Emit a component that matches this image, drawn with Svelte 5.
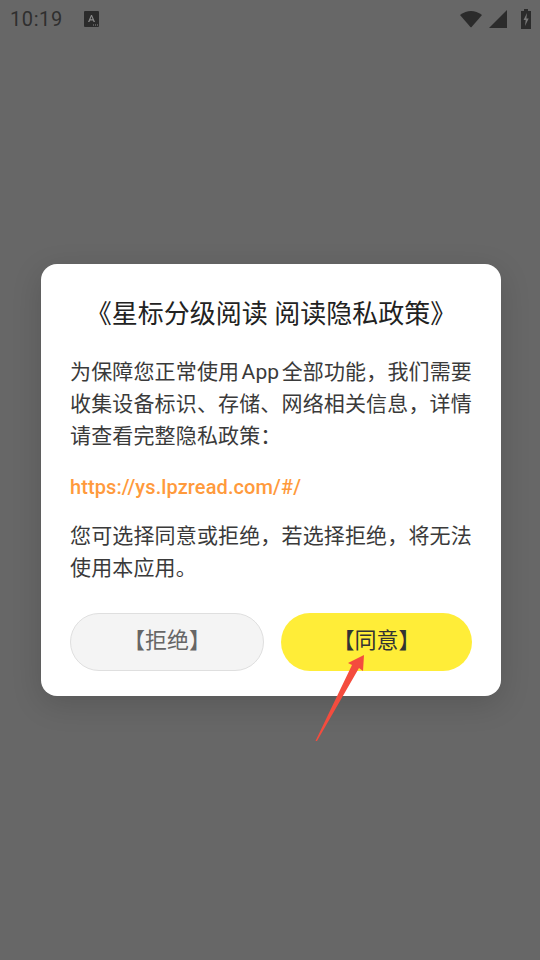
<script>
  const lines1 = ['为保障您正常使用 App 全部功能，我们需要', '收集设备标识、存储、网络相关信息，详情', '请查看完整隐私政策：'];
  const lines2 = ['您可选择同意或拒绝，若选择拒绝，将无法', '使用本应用。'];
</script>

<div class="screen">
  <header class="status">
    <div class="left">
      <span class="time">10:19</span>
      <svg class="a-icon" width="16" height="16" viewBox="0 0 16 16">
        <rect width="15" height="16" rx="1" fill="#2b2b2b" />
        <path d="M4 11 L7 4 H8 L11 11 H9.6 L9 9.4 H6 L5.4 11 Z M6.5 8.2 H8.5 L7.5 5.6 Z" fill="#8a8a8a" fill-rule="evenodd" />
        <path d="M9 14h1M11 14h1M13 14h1" stroke="#8a8a8a" stroke-width="1" />
      </svg>
    </div>
    <div class="right">
      <svg width="24" height="18" viewBox="0 0 24 18"><path d="M0 5 Q11 -3 22 5 L11.600 17 Q11 17.500 10.400 17 Z" fill="#2b2b2b" /></svg>
      <svg width="18" height="18" viewBox="0 0 18 18"><path d="M0 18 L18 0 V18 Z" fill="#2b2b2b" /></svg>
      <svg class="battery" width="10" height="20" viewBox="0 0 10 20">
        <path d="M3 0 H7 V2 H10 V20 H0 V2 H3 Z" fill="#2b2b2b" />
        <path d="M6 4 L2.500 11 H4.700 L4 17 L7.700 9.500 H5.400 Z" fill="#777" />
      </svg>
    </div>
  </header>

  <main class="center">
    <section class="dialog">
      <h1>《星标分级阅读 阅读隐私政策》</h1>
      <div class="para first">
        {#each lines1 as l}<p>{l}</p>{/each}
      </div>
      <a class="link" href="#top">https://ys.lpzread.com/#/</a>
      <div class="para second">
        {#each lines2 as l}<p>{l}</p>{/each}
      </div>
      <div class="actions">
        <button class="reject"><span>【拒绝】</span></button>
        <button class="agree"><span>【同意】</span></button>
      </div>
      <svg class="arrow" width="60" height="94" viewBox="0 0 60 94">
        <path d="M4.500 91 L41 15 L37 13 L53 5 L52 21 L48 18 L6 91 Z" fill="#f44c3e" />
      </svg>
    </section>
  </main>
</div>

<style>
  :global(body) { margin: 0; }
  .screen {
    width: 540px;
    height: 960px;
    background: #676767;
    font-family: "Roboto", "Noto Sans CJK SC", sans-serif;
    display: flex;
    flex-direction: column;
    overflow: hidden;
  }
  .status {
    height: 38px;
    flex: none;
    display: flex;
    justify-content: space-between;
    align-items: center;
    padding: 0 9px 0 10px;
    color: #2f2f2f;
  }
  .left { display: flex; align-items: center; gap: 21px; }
  .time { font-size: 20px; letter-spacing: 0.6px; line-height: 38px; }
  .a-icon { display: block; }
  .right { display: flex; align-items: center; gap: 5px; }
  .right svg { display: block; }
  .battery { margin-left: 9px; }
  .center {
    flex: 1;
    padding: 226px 39px 0 41px;
  }
  .dialog {
    position: relative;
    background: #fff;
    border-radius: 16px;
    height: 432px;
    box-sizing: border-box;
    padding: 32px 29px 25px;
    display: flex;
    flex-direction: column;
    box-shadow: 0 8px 30px rgba(0, 0, 0, 0.15);
  }
  h1 {
    margin: 0;
    font-size: 26px;
    font-weight: 400;
    line-height: 36px;
    text-align: center;
    color: #222;
    white-space: nowrap;
  }
  .para.first { margin-top: 24px; }
  .para.second { margin-top: 17px; }
  p {
    margin: 0;
    font-size: 21px;
    line-height: 32px;
    color: #3a3a3a;
    white-space: nowrap;
    letter-spacing: 0.15px;
    word-spacing: -3px;
  }
  .link {
    margin-top: 19px;
    font-size: 20px;
    line-height: 32px;
    font-weight: 500;
    letter-spacing: 0.1px;
    color: #ff9a3c;
    text-decoration: none;
  }
  .actions {
    margin-top: auto;
    display: flex;
    gap: 17px;
  }
  button {
    height: 58px;
    border-radius: 29px;
    font: inherit;
    font-size: 22px;
    padding: 0 0 8px;
    box-sizing: border-box;
  }
  .reject {
    width: 194px;
    background: #f4f4f4;
    border: 1px solid #dfdfdf;
    color: #666;
  }
  .agree {
    width: 191px;
    background: #ffed38;
    border: 0;
    color: #333;
  }
  .arrow {
    position: absolute;
    left: 270px;
    top: 386px;
  }
</style>
